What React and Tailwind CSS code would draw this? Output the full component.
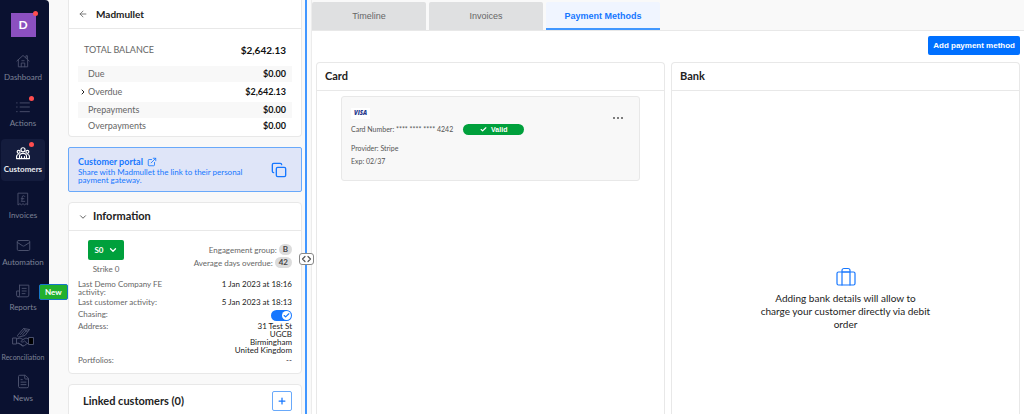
import { ArrowLeft, Check, ChevronDown, ChevronRight, Copy, ExternalLink, FileText, Mail, Plus } from 'lucide-react'

const Svg = ({ children, className, viewBox = '0 0 24 24', stroke = 1.6 }) => (
  <svg className={className} viewBox={viewBox} fill="none" stroke="currentColor" strokeWidth={stroke} strokeLinecap="round" strokeLinejoin="round" aria-hidden="true">
    {children}
  </svg>
)

const HomeIcon = () => (
  <Svg className="h-[14px] w-[14px]">
    <path d="M1.5 12 12 2.5 22.5 12M4 10v12h16V10M17 6V3h2.5v5" />
    <path d="M9 22v-6.5h6V22M10 11.5h4" />
  </Svg>
)

const ListIcon = () => (
  <Svg className="h-[14px] w-[14px]">
    <path d="M7 5h16M7 12h16M7 20h16M1 5h1M1 12h1M1 20h1" />
  </Svg>
)

const UsersIcon = () => (
  <Svg className="h-[14px] w-[14px]" stroke={2}>
    <circle cx="12" cy="6.5" r="3.5" />
    <circle cx="4.5" cy="10" r="2.5" />
    <circle cx="19.5" cy="10" r="2.5" />
    <path d="M6 21.5v-4c0-3 2.5-5 6-5s6 2 6 5v4z" />
    <path d="M9.5 21v-3M14.5 21v-3M3.5 14.5C2 15 1 16 1 18v3.5h5M20.5 14.5c1.5.5 2.5 1.5 2.5 3.5v3.5h-5" />
  </Svg>
)

const PoundIcon = () => (
  <Svg className="h-[14px] w-[14px]">
    <path d="M4 2h16v20l-2.7-2-2.6 2-2.7-2-2.7 2-2.6-2L4 22z" />
    <path d="M15 7.5C14.5 6 10.5 5.5 10.5 9v3c0 2-.5 3-1.5 4h6M9 11.5h4.5" />
  </Svg>
)

const ReportIcon = () => (
  <Svg className="h-[14px] w-[14px]">
    <path d="M6 2h16v17a3 3 0 0 1-3 3H4a3 3 0 0 1-3-3v-7h5M6 2v17a2.5 2.5 0 0 1-2.5 3" />
    <path d="M10.5 7.5h7M10.5 12h7M10.5 16.5h5" />
  </Svg>
)

const HandshakeIcon = () => (
  <Svg className="h-5 w-[22px]" viewBox="0 0 44 40" stroke={2}>
    <path d="M2 22h7v12H2zM9 24l7-2 6 3 6-3 6 2M9 32l5 1 7 5 4-1 4-3 4-2" />
    <path d="m22 25-4 4c2 2 5 1 7-1l7 6M18 36l-4-4M22 38l-4-4" />
    <path d="M11 17 23 3l12 2-9 12-12 3zM17 15l8-9M21 16l8-9M23 3l7 6 5-4" />
    <path d="M34 21h9v14h-9z" />
    <path d="M36 23h5v10h-5z" fill="#000" stroke="#000" />
  </Svg>
)

const SuitcaseIcon = () => (
  <Svg className="h-5 w-5 text-[#1677ff]" viewBox="0 0 20 20" stroke={1.2}>
    <rect x="1" y="5" width="18" height="13" rx="1.5" />
    <path d="M6 18V3.5A2 2 0 0 1 8 1.5h4a2 2 0 0 1 2 2V18M6 5h8" />
  </Svg>
)

const nav = [
  { label: 'Dashboard', icon: <HomeIcon /> },
  { label: 'Actions', icon: <ListIcon />, dot: true },
  { label: 'Customers', icon: <UsersIcon />, dot: true, active: true },
  { label: 'Invoices', icon: <PoundIcon /> },
  { label: 'Automation', icon: <Mail className="h-[15px] w-[15px]" strokeWidth={1.6} /> },
  { label: 'Reports', icon: <ReportIcon />, isNew: true },
  { label: 'Reconciliation', icon: <HandshakeIcon />, tall: true },
  { label: 'News', icon: <FileText className="h-[15px] w-[15px]" strokeWidth={1.6} /> },
]

const NavItem = ({ label, icon, dot, active, isNew, tall }) => (
  <a
    href="#"
    aria-current={active ? 'page' : undefined}
    className={`relative flex shrink-0 flex-col items-center rounded leading-[10px] ${tall ? 'h-10 justify-end gap-[5px] pb-px text-[7px]' : 'h-[42px] justify-center gap-1 text-[8px]'} ${active ? 'bg-[#141c3d] font-bold text-[#e8eaf0]' : 'text-[#7d8296]'}`}
  >
    <span className={`relative flex items-center justify-center ${active ? 'text-white' : 'text-[#4a506c]'}`}>
      {icon}
      {dot && <span className="absolute -top-1 -right-1 h-[5px] w-[5px] rounded-full bg-[#ff4d4f]" />}
    </span>
    <span>{label}</span>
    {isNew && (
      <span className="absolute top-[7px] left-[38px] z-10 rounded-[2px] border border-[#1677c8] bg-[#22b02e] px-[5px] py-[2px] text-[8px] leading-[10px] font-bold text-white">New</span>
    )}
  </a>
)

const Sidebar = () => (
  <nav className="z-10 flex w-[49px] shrink-0 flex-col rounded-tr bg-[#0a1130] pt-[13px] pr-1 pl-px">
    <button type="button" className="relative mb-[10px] flex h-6 w-[25px] shrink-0 items-center justify-center self-center bg-[#8b50c0] text-xs font-bold text-white">
      D
      <span className="absolute -top-[2px] -right-[2px] h-[5px] w-[5px] rounded-full bg-[#ff4d4f]" />
    </button>
    <div className="flex flex-col gap-1">
      {nav.map((n) => <NavItem key={n.label} {...n} />)}
    </div>
  </nav>
)

const balances = [
  { label: 'Due', value: '$0.00', className: 'h-4 bg-[#f8f8f8]' },
  { label: 'Overdue', value: '$2,642.13', className: 'h-5', expandable: true },
  { label: 'Prepayments', value: '$0.00', className: 'h-4 bg-[#f8f8f8]' },
  { label: 'Overpayments', value: '$0.00', className: 'h-4' },
]

const BalanceCard = () => (
  <section className="rounded-b border border-t-0 border-[#e8e8e8] bg-white">
    <header className="flex h-[29px] items-center gap-2 border-b border-[#e8e8e8] px-[9px]">
      <button type="button" aria-label="Back"><ArrowLeft className="h-[10px] w-[10px] text-[#666]" /></button>
      <h1 className="text-[10px] font-bold text-[#222]">Madmullet</h1>
    </header>
    <div className="px-[9px] pt-[11px] pb-[2px]">
      <div className="mb-[6px] flex h-5 items-center justify-between px-[6px]">
        <span className="text-[9px] text-[#666]">TOTAL BALANCE</span>
        <span className="text-[10px] font-bold text-[#111]">$2,642.13</span>
      </div>
      {balances.map(({ label, value, className, expandable }) => (
        <div key={label} className={`flex items-center justify-between pr-[6px] text-[9px] ${className}`}>
          <span className="flex items-center text-[#666]">
            <span className="flex w-[10px] justify-center">
              {expandable && <ChevronRight className="h-2 w-2 text-[#222]" strokeWidth={3} />}
            </span>
            {label}
          </span>
          <span className="font-bold text-[#111]">{value}</span>
        </div>
      ))}
    </div>
  </section>
)

const PortalCard = () => (
  <section className="flex h-[45px] items-center justify-between rounded-[2px] border border-[#69a9fa] bg-[#dfe5f8] pr-[14px] pl-[9px] text-[#1677ff]">
    <div>
      <a href="#" className="flex items-center gap-1 text-[9px] leading-3 font-bold">
        Customer portal
        <ExternalLink className="h-[10px] w-[10px]" />
      </a>
      <p className="w-[175px] text-[8px] leading-2">Share with Madmullet the link to their personal payment gateway.</p>
    </div>
    <button type="button" aria-label="Copy link"><Copy className="h-4 w-4" /></button>
  </section>
)

const InfoRow = ({ label, children }) => (
  <div className="mb-[2px] flex min-h-[10px] items-start justify-between">
    <dt className="w-[90px]">{label}</dt>
    <dd className="text-right text-[#222]">{children}</dd>
  </div>
)

const Pill = ({ children }) => (
  <span className="rounded-full bg-[#dcdcdc] px-1 text-[8px] leading-[11px] font-bold text-[#444]">{children}</span>
)

const InfoCard = () => (
  <section className="rounded border border-[#e8e8e8] bg-white">
    <header className="flex h-7 items-center gap-[5px] border-b border-[#e8e8e8] px-[9px]">
      <button type="button" aria-label="Collapse"><ChevronDown className="h-[10px] w-[10px] text-[#444]" /></button>
      <h2 className="text-[11px] font-bold text-[#222]">Information</h2>
    </header>
    <div className="px-[9px] pt-[9px] pb-[5px] text-[8px] leading-2 text-[#666]">
      <div className="mb-[7px] flex justify-between">
        <div className="ml-[10px] flex flex-col items-center gap-[5px]">
          <button type="button" className="flex h-5 w-9 items-center justify-center gap-1 rounded-[2px] bg-[#00a03c] font-bold text-white">
            S0 <ChevronDown className="h-[10px] w-[10px]" strokeWidth={3} />
          </button>
          <span>Strike 0</span>
        </div>
        <div className="flex flex-col items-end gap-[2px] pt-1">
          <div className="flex items-center gap-[2px]">Engagement group: <Pill>B</Pill></div>
          <div className="flex items-center gap-[2px]">Average days overdue: <Pill>42</Pill></div>
        </div>
      </div>
      <dl>
        <InfoRow label="Last Demo Company FE activity:">1 Jan 2023 at 18:16</InfoRow>
        <InfoRow label="Last customer activity:">5 Jan 2023 at 18:13</InfoRow>
        <InfoRow label={<label htmlFor="chasing">Chasing:</label>}>
          <span className="relative flex h-[10px]">
            <input id="chasing" type="checkbox" role="switch" defaultChecked className="peer h-[11px] w-[21px] appearance-none rounded-full bg-[#bbb] checked:bg-[#1677ff]" />
            <span className="pointer-events-none absolute top-px left-px flex h-[9px] w-[9px] items-center justify-center rounded-full bg-white text-[#1677ff] peer-checked:left-[11px]">
              <Check className="h-[7px] w-[7px]" strokeWidth={4} />
            </span>
          </span>
        </InfoRow>
        <InfoRow label="Address:">31 Test St<br />UGCB<br />Birmingham<br />United Kingdom</InfoRow>
        <InfoRow label="Portfolios:">--</InfoRow>
      </dl>
    </div>
  </section>
)

const LinkedCard = () => (
  <section className="flex items-center justify-between rounded border border-[#e8e8e8] bg-white py-[6px] pr-[9px] pl-[14px]">
    <h2 className="text-[11px] font-bold text-[#222]">Linked customers (0)</h2>
    <button type="button" aria-label="Add linked customer" className="flex h-5 w-5 items-center justify-center rounded-[2px] border border-[#69a9fa] text-[#1677ff]">
      <Plus className="h-[10px] w-[10px]" strokeWidth={3} />
    </button>
  </section>
)

const tabs = ['Timeline', 'Invoices', 'Payment Methods']

const Tabs = () => (
  <div role="tablist" className="flex h-[31px] shrink-0 gap-[3px] border-b border-[#e8e8e8] pt-[2px]">
    {tabs.map((t, i) => (
      <button
        key={t}
        type="button"
        role="tab"
        aria-selected={i === 2}
        className={`w-[114px] rounded-t-[2px] border-b-2 pt-[3px] font-['Liberation_Sans',sans-serif] text-[9px] ${i === 2 ? 'border-[#4096ff] bg-[#f0f5ff] font-bold text-[#1677ff]' : 'border-[#dfe0e1] bg-[#dfe0e1] text-[#666]'}`}
      >
        {t}
      </button>
    ))}
  </div>
)

const Panel = ({ title, children }) => (
  <section className="flex min-w-0 flex-1 flex-col rounded-t border border-b-0 border-[#e8e8e8] bg-white">
    <h2 className="flex h-7 shrink-0 items-center border-b border-[#e8e8e8] px-2 text-[11px] font-bold text-[#222]">{title}</h2>
    {children}
  </section>
)

const PaymentCard = () => (
  <article className="mx-6 mt-[5px] flex h-[85px] flex-col rounded-[3px] border border-[#e8e8e8] bg-[#f8f8f8] px-[9px] text-[7px] leading-[13px] text-[#555]">
    <div className="mt-[10px] flex h-3 items-center justify-between">
      <span className="bg-white px-[3px] font-['Open_Sans',sans-serif] text-[6px] leading-[11px] font-extrabold text-[#25388c] italic">VISA</span>
      <button type="button" aria-label="More" className="mt-[9px] mr-[7px] flex gap-[2px]">
        {[0, 1, 2].map((i) => <span key={i} className="h-[2px] w-[2px] rounded-full bg-[#555]" />)}
      </button>
    </div>
    <div className="mt-1 flex items-center gap-[10px]">
      <span>Card Number: **** **** **** 4242</span>
      <span className="flex h-[11px] w-[61px] items-center justify-center gap-1 rounded-full bg-[#00a03c] font-['Liberation_Sans',sans-serif] font-bold text-white">
        <Check className="h-[7px] w-[7px]" strokeWidth={4} />
        Valid
      </span>
    </div>
    <span className="mt-[6px]">Provider: Stripe</span>
    <span>Exp: 02/37</span>
  </article>
)

const EmptyBank = () => (
  <div className="flex flex-1 flex-col items-center pt-[176px] text-center">
    <SuitcaseIcon />
    <p className="mt-[5px] w-[172px] text-[10px] leading-[13px] text-[#222]">Adding bank details will allow to charge your customer directly via debit order</p>
  </div>
)

export default function App() {
  return (
    <div className="flex h-screen overflow-hidden bg-[#f9f9f9] font-[Lato,sans-serif]">
      <Sidebar />
      <aside className="flex w-[256px] shrink-0 flex-col pr-[3px] pl-[19px]">
        <div className="flex flex-col gap-[10px]">
          <BalanceCard />
          <PortalCard />
          <InfoCard />
          <LinkedCard />
        </div>
      </aside>
      <div className="relative w-[2px] shrink-0 bg-[#4096ff]">
        <button type="button" aria-label="Resize panels" className="absolute top-[253px] -left-[6px] z-10 flex h-3 w-[15px] items-center justify-center rounded-[3px] border border-[#888] bg-white text-[#555]">
          <Svg className="h-2 w-[11px]" viewBox="0 0 11 8" stroke={1.2}>
            <path d="M4 1.5 1.5 4 4 6.5M7 1.5 9.5 4 7 6.5" />
          </Svg>
        </button>
      </div>
      <main className="ml-1 flex min-w-0 flex-1 flex-col border-l border-[#ececec]">
        <Tabs />
        <div className="flex flex-1 flex-col bg-white px-1 pt-[5px]">
          <button type="button" className="mb-[7px] h-[19px] self-end rounded-[2px] bg-[#0070ff] px-[5px] font-['Liberation_Sans',sans-serif] text-[8px] font-bold text-white">Add payment method</button>
          <div className="flex flex-1 gap-[6px]">
            <Panel title="Card"><PaymentCard /></Panel>
            <Panel title="Bank"><EmptyBank /></Panel>
          </div>
        </div>
      </main>
    </div>
  )
}
